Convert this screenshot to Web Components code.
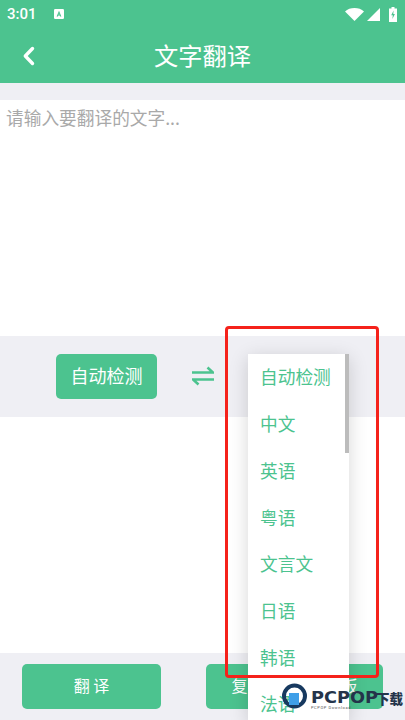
<!DOCTYPE html>
<html lang="zh">
<head>
<meta charset="utf-8">
<title>文字翻译</title>
<style>
html,body{margin:0;padding:0;background:#fff}
body{width:405px;height:720px;overflow:hidden;position:relative;font-family:"Noto Sans CJK SC","Noto Sans",sans-serif}
</style>
</head>
<body>
<translate-page></translate-page>
<script>
const GREEN = '#4cc38f'

class StatusBar extends HTMLElement {
  constructor() {
    super()
    this.attachShadow({mode:'open'})
    this.shadowRoot.innerHTML = `
<style>
:host{display:flex;align-items:center;height:28px;padding:0 8px 0 7px;color:#fff;font:500 15px/1 Roboto,sans-serif}
.a{margin-left:17px;width:10px;height:10px;display:block}
.right{margin-left:auto;display:flex;align-items:center}
svg{display:block}
</style>
<span>3:01</span>
<svg class="a" viewBox="0 0 10 10"><rect width="10" height="10" rx="1.2" fill="#fff"/><path d="M5 1.8 2.6 7.6h1.3l.4-1.1h1.4l.4 1.1h1.3L5 1.8zM4.6 5.5 5 4.2l.4 1.3z" fill="${GREEN}"/></svg>
<div class="right">
  <svg width="19" height="13" viewBox="0 0 19 13"><path d="M0 3.4C2.5 1.2 5.8 0 9.5 0S16.5 1.2 19 3.4L9.5 13z" fill="#fff"/></svg>
  <svg width="13" height="13" viewBox="0 0 13 13" style="margin-left:3px"><path d="M13 0V13H0z" fill="#fff"/></svg>
  <svg width="8" height="15" viewBox="0 0 8 15" style="margin-left:9px"><path d="M2.5 0h3v1.5H8V15H0V1.500h2.500z" fill="#fff"/><path d="M4.600 3.500 2.200 8.300h1.600L3.400 12l2.500-5H4.300z" fill="${GREEN}"/></svg>
</div>`
  }
}
customElements.define('status-bar',StatusBar)

class AppHeader extends HTMLElement {
  constructor() {
    super()
    this.attachShadow({mode:'open'})
    this.shadowRoot.innerHTML = `
<style>
:host{display:grid;grid-template-columns:1fr auto 1fr;align-items:center;height:55px;color:#fff}
svg{display:block;margin-left:22px}
h1{margin:0 0 1px;font:400 24.300px/1 "Noto Sans CJK SC",sans-serif}
</style>
<svg width="13" height="20" viewBox="0 0 13 20"><path d="M10.500 2.500 3.300 10l7.200 7.500" fill="none" stroke="#fff" stroke-width="3.400" stroke-linecap="round" stroke-linejoin="round"/></svg>
<h1><slot></slot></h1>
<span></span>`
  }
}
customElements.define('app-header',AppHeader)

class GreenButton extends HTMLElement {
  constructor() {
    super()
    this.attachShadow({mode:'open'})
    this.shadowRoot.innerHTML = `
<style>
:host{display:flex;align-items:center;justify-content:center;box-sizing:border-box;height:45px;padding-bottom:3px;background:${GREEN};border-radius:5px;color:#fff;font:400 var(--btn-size,16px)/1 "Noto Sans CJK SC",sans-serif;white-space:pre;word-spacing:var(--btn-word,0)}
</style>
<slot></slot>`
  }
}
customElements.define('green-button',GreenButton)

class LangBar extends HTMLElement {
  constructor() {
    super()
    this.attachShadow({mode:'open'})
    this.shadowRoot.innerHTML = `
<style>
:host{display:flex;align-items:flex-start;box-sizing:border-box;height:81px;padding:18px 0 0 56px;background:#efeff4}
green-button{width:101px;--btn-size:18px}
svg{display:block;margin:12px 0 0 35px}
</style>
<green-button>自动检测</green-button>
<svg width="22" height="20" viewBox="0 0 22 20"><path d="M0 6.500H21L15.500 1.500M22 13.500H1L6.500 18.500" fill="none" stroke="${GREEN}" stroke-width="2.600"/></svg>`
  }
}
customElements.define('lang-bar',LangBar)

class ActionBar extends HTMLElement {
  constructor() {
    super()
    this.attachShadow({mode:'open'})
    this.shadowRoot.innerHTML = `
<style>
:host{display:flex;box-sizing:border-box;height:67px;padding:11px 22px 0;justify-content:space-between;background:#efeff4}
.left{width:139px}
.right{width:177px;--btn-word:2.400px}
</style>
<green-button class="left">翻 译</green-button>
<green-button class="right">复 制 到 剪 贴 板</green-button>`
  }
}
customElements.define('action-bar',ActionBar)

class LangDropdown extends HTMLElement {
  constructor() {
    super()
    this.attachShadow({mode:'open'})
    const items = ['自动检测','中文','英语','粤语','文言文','日语','韩语','法语']
    this.shadowRoot.innerHTML = `
<style>
:host{position:absolute;left:248px;top:354px;width:101px;height:366px;background:#fff;overflow:hidden;box-shadow:0 4px 18px rgba(0,0,0,.16);color:${GREEN};font:400 17.700px/1 "Noto Sans CJK SC",sans-serif}
ul{list-style:none;margin:0;padding:0}
li{display:flex;align-items:center;box-sizing:border-box;height:46.700px;padding:0 0 0 12px}
.bar{position:absolute;right:0;top:0;width:4px;height:99px;background:#bcbcbc}
</style>
<ul>${items.map(t=>`<li>${t}</li>`).join('')}</ul>
<div class="bar"></div>`
  }
}
customElements.define('lang-dropdown',LangDropdown)

class NoteBox extends HTMLElement {
  constructor() {
    super()
    this.attachShadow({mode:'open'})
    this.shadowRoot.innerHTML = `
<style>
:host{position:absolute;left:225px;top:326px;width:154px;height:352px;box-sizing:border-box;border:3px solid #f5221b;border-radius:4px}
</style>`
  }
}
customElements.define('note-box',NoteBox)

class PcpopMark extends HTMLElement {
  constructor() {
    super()
    this.attachShadow({mode:'open'})
    this.shadowRoot.innerHTML = `
<style>
:host{position:absolute;left:281px;top:683px;display:flex;align-items:flex-start}
svg{display:block}
.txt{margin:8px 0 0 3px;color:#24344a}
b{display:flex;align-items:center;font:900 15px/15px "DejaVu Sans",sans-serif;white-space:nowrap}
.en{display:inline-block;width:65px;transform:scaleX(1.18);transform-origin:0 50%}
.cn{font:900 13.500px/15px "Noto Sans CJK SC",sans-serif}
small{display:block;margin-top:-1px;font:400 4px/6px Roboto,sans-serif;letter-spacing:.600px;color:#555}
</style>
<svg width="27" height="27" viewBox="0 0 27 27"><circle cx="13.500" cy="13" r="10.500" fill="none" stroke="#17395f" stroke-width="4"/><rect x="8" y="10" width="10" height="12" fill="#3f9fe8"/></svg>
<div class="txt"><b><span class="en">PCPOP</span><span class="cn">下载</span></b><small>PCPOP Download</small></div>`
  }
}
customElements.define('pcpop-mark',PcpopMark)

class TranslatePage extends HTMLElement {
  constructor() {
    super()
    this.attachShadow({mode:'open'})
    this.shadowRoot.innerHTML = `
<style>
:host{display:flex;flex-direction:column;height:720px;background:#fff}
.top{background:${GREEN}}
.gap{height:17px;background:#efeff4}
.input{height:236px;box-sizing:border-box;padding:5px 6px;color:#a9a9a9;font:400 17.700px/24px "Noto Sans CJK SC",sans-serif}
.output{flex:1}
</style>
<div class="top">
  <status-bar></status-bar>
  <app-header>文字翻译</app-header>
</div>
<div class="gap"></div>
<div class="input">请输入要翻译的文字...</div>
<lang-bar></lang-bar>
<div class="output"></div>
<action-bar></action-bar>
<lang-dropdown></lang-dropdown>
<note-box></note-box>
<pcpop-mark></pcpop-mark>`
  }
}
customElements.define('translate-page',TranslatePage)
</script>
</body>
</html>
